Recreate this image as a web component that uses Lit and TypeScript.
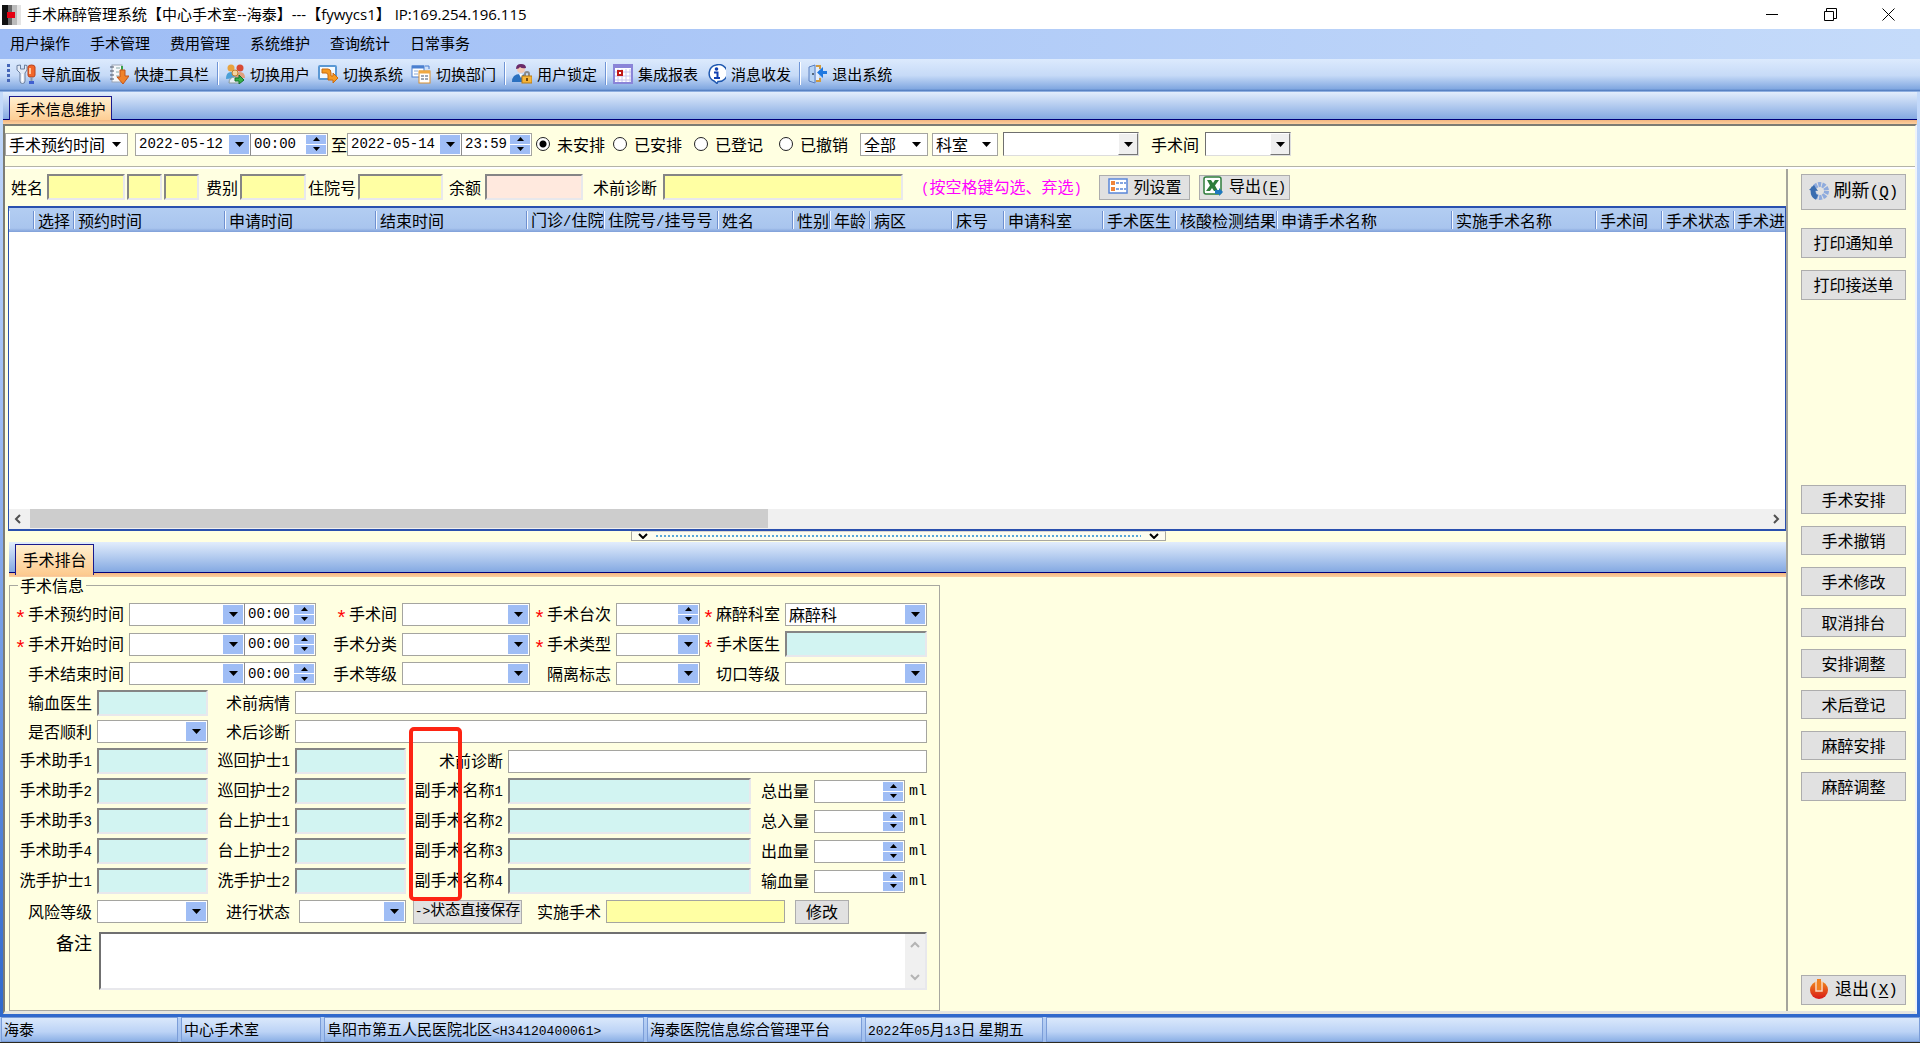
import { LitElement, html, css, svg, nothing } from "lit";
import { customElement } from "lit/decorators.js";

const toolbarGroups: { icon: string; text: string }[][] = [
  [{ icon: "tools", text: "导航面板" }, { icon: "quick", text: "快捷工具栏" }],
  [{ icon: "users", text: "切换用户" }, { icon: "system", text: "切换系统" }, { icon: "dept", text: "切换部门" }],
  [{ icon: "lock", text: "用户锁定" }],
  [{ icon: "report", text: "集成报表" }, { icon: "info", text: "消息收发" }],
  [{ icon: "exit", text: "退出系统" }],
];

const menus = ["用户操作", "手术管理", "费用管理", "系统维护", "查询统计", "日常事务"];

const columns: [string, number][] = [
  ["", 25], ["选择", 40], ["预约时间", 151], ["申请时间", 151], ["结束时间", 151],
  ["门诊/住院", 77], ["住院号/挂号号", 114], ["姓名", 75], ["性别", 37], ["年龄", 40],
  ["病区", 82], ["床号", 52], ["申请科室", 99], ["手术医生", 73], ["核酸检测结果", 101],
  ["申请手术名称", 175], ["实施手术名称", 144], ["手术间", 66], ["手术状态", 72], ["手术进", 52],
];

const actions = ["手术安排", "手术撤销", "手术修改", "取消排台", "安排调整", "术后登记", "麻醉安排", "麻醉调整"];

const icons: Record<string, unknown> = {
  tools: svg`<path d="M1 1.500v4.500l3 3v8q0 2.500 2.500 2.500T9 17V9l2-3V1.500L8.500 1v4h-4V1z" fill="#e4ebf6" stroke="#6a7f9f"/><path d="M6.500 10v7" stroke="#fff" stroke-width="1.500"/><path d="M12 3q0-2 3.500-2T19 3v8q0 2-2 2h-3q-2 0-2-2z" fill="#f2662a" stroke="#b8401a"/><path d="M14 4v6" stroke="#ffc59b" stroke-width="2"/><path d="M15.500 13v4" stroke="#8a94a8" stroke-width="2"/><path d="M13 18.500h5" stroke="#3f5fd0" stroke-width="3"/>`,
  quick: svg`<rect x="3" y="1" width="10" height="17" fill="#f6f8fb" stroke="#9aa4b5"/><path d="M1 3h4M1 7h4M1 11h4M1 15h4" stroke="#4a5568"/><path d="M7 4h4M7 8h3M7 12h3" stroke="#8aa" /><path d="M13 2v5" stroke="#35a24a" stroke-width="2"/><path d="M11 6h5v6h4l-6 8-6-7h3z" fill="#f0822a" stroke="#c0541a"/>`,
  users: svg`<circle cx="6" cy="4" r="3.500" fill="#e8a33e"/><path d="M1 15q0-7 5-7t5 6z" fill="#4aa0d8"/><circle cx="15" cy="4" r="3.500" fill="#d84a34"/><path d="M10 14q0-6 5-6t5 6z" fill="#e0a080"/><circle cx="10" cy="9" r="3" fill="#f4d4a0" stroke="#c08030"/><path d="M4 19q0-6 6-6 4 0 5 6z" fill="#e8eef4" stroke="#8a9a99"/><path d="M10 14h4v-3l5 5-5 4v-3h-4z" fill="#37b24a" stroke="#14702a"/>`,
  system: svg`<rect x="1" y="2" width="17" height="13" rx="1" fill="#f4faff" stroke="#5a98d4" stroke-width="2"/><path d="M4 5h6q3 0 3 4v3h2V9l5 5-5 5v-3h-5v-5q0-2-2-2H4z" fill="#f59a23" stroke="#c96a10"/>`,
  dept: svg`<rect x="1" y="2" width="12" height="11" fill="#fff" stroke="#4a7fd0"/><path d="M1 3h12" stroke="#4a7fd0" stroke-width="3"/><path d="M3 7h4M3 10h4" stroke="#88a8d8"/><path d="M14 2h4v3" stroke="#4a7fd0" fill="none"/><rect x="8" y="7" width="11" height="12" fill="#fff" stroke="#d89030"/><path d="M8 8h11" stroke="#f0a840" stroke-width="3"/><path d="M10 12h3M14 12h3M10 15h3M14 15h3" stroke="#a0a8b4" stroke-width="2"/>`,
  lock: svg`<circle cx="9" cy="5" r="4" fill="#f3c9b4"/><path d="M4 5q0-5 5-5 5 0 5 4-4 1-6-1-1 2-4 2z" fill="#6a2a6a"/><path d="M0 18q0-8 8-8t8 8z" fill="#2a70c0"/><path d="M7 10l2 4 2-4z" fill="#fff"/><path d="M13 12v-2q0-2 2-2t2 2v2" fill="none" stroke="#8a8a8a" stroke-width="2"/><rect x="10" y="12" width="10" height="7" fill="#f5b53a" stroke="#b87a14"/><path d="M15 14v3" stroke="#7a4a08" stroke-width="2"/>`,
  report: svg`<rect x="1" y="1" width="18" height="18" fill="#fff" stroke="#8a84d8" stroke-width="2"/><path d="M1 3h18" stroke="#8a84d8" stroke-width="2"/><path d="M5 5v13M9 5v13M13 5v13M17 5v13M2 8h16M2 12h16M2 16h16" stroke="#c8c4f0"/><rect x="5" y="7" width="4" height="4" fill="#fff" stroke="#c01818" stroke-width="2"/>`,
  info: svg`<path d="M10 1a8.500 8.500 0 1 1 2 16.500l-1 2-3-2.500A8.500 8.500 0 0 1 10 1z" fill="#fff" stroke="#1f58b0" stroke-width="1.500"/><circle cx="10.500" cy="5" r="1.800" fill="#1040b0"/><path d="M8 8.500h3.500V14M8 14h6" stroke="#1040b0" stroke-width="2" fill="none"/>`,
  exit: svg`<path d="M2 3l6-2v18l-6-2z" fill="#b8d4f4" stroke="#5a7fc0"/><path d="M9 2h4v3M13 14v3H9" fill="none" stroke="#d09a40" stroke-width="2"/><path d="M9 3h3v13H9z" fill="#e4eefb"/><circle cx="6" cy="10" r="1" fill="#334455"/><path d="M20 7v3h-4v4l-6-5.500L16 3v4z" fill="#1f78e0"/>`,
  list: svg`<rect x="1" y="3" width="18" height="14" fill="#fff" stroke="#5a86d8" stroke-width="1.500"/><rect x="3" y="5" width="4" height="4" fill="#f0843a"/><rect x="3" y="11" width="4" height="4" fill="#f0843a"/><path d="M8 7h10M8 13h10" stroke="#5a86d8" stroke-width="1.500" stroke-dasharray="3 1"/>`,
  excel: svg`<rect x="1" y="1" width="17" height="17" rx="2" fill="#fff" stroke="#2f7d3b" stroke-width="1.500"/><path d="M4 4h4l2 3 2-3h4l-4 5.500L15 15h-4l-2-3-2 3H3l4-5.500z" fill="#2f7d3b"/><path d="M12 14h4v-2l4 4-4 4v-2h-4z" fill="#1f78c0"/>`,
  refresh: svg`<circle cx="11" cy="10" r="6.500" fill="none" stroke="#8fabdd" stroke-width="5" stroke-dasharray="3 1"/><path d="M5 6.500A7 7 0 0 0 8 16.500" fill="none" stroke="#3a6db0" stroke-width="5"/><path d="M0 9l5-5 4 6z" fill="#3a6db0"/>`,
  power: svg`<defs><linearGradient id="pw" x1="0" y1="0" x2="0" y2="1"><stop offset="0" stop-color="#f08a1c"/><stop offset="1" stop-color="#d81818"/></linearGradient></defs><circle cx="10" cy="11" r="9" fill="url(#pw)"/><path d="M7 2v10h6V2" fill="none" stroke="#fbd9c0" stroke-width="1.500"/><rect x="8" y="0" width="4" height="11" fill="#f08020"/>`,
};

const icon = (name: string) =>
  html`<svg class="icon" viewBox="0 0 20 20" width="20" height="20" aria-hidden="true">${icons[name]}</svg>`;

/* Latin runs are set in a half-width monospaced face beside full-width Chinese. */
const mix = (text: string) =>
  text.split(/([\x21-\x7e]+)/).map((p) => (/^[\x21-\x7e]/.test(p) ? html`<span class="half">${p}</span>` : p));

const down = html`<svg class="tri" viewBox="0 0 9 5" width="9" height="5" aria-hidden="true"><path d="M0 0h9L4.500 5z" /></svg>`;
const up = html`<svg class="tri" viewBox="0 0 7 4" width="7" height="4" aria-hidden="true"><path d="M0 4h7L3.500 0z" /></svg>`;
const downSmall = html`<svg class="tri" viewBox="0 0 7 4" width="7" height="4" aria-hidden="true"><path d="M0 0h7L3.500 4z" /></svg>`;

@customElement("app-root")
export class AppRoot extends LitElement {
  static styles = css`
    :host { display: block; font-family: "Noto Sans CJK SC", "Liberation Sans", sans-serif; font-size: 16px; line-height: 20px; color: #000; }
    * { box-sizing: border-box; }
    button, input, select, textarea { font: inherit; color: inherit; margin: 0; padding: 0; border-radius: 0; min-width: 0; outline: none; }
    .app { min-height: 100vh; display: flex; flex-direction: column; background: #3069cc; }
    .titlebar { height: 29px; flex: none; background: #fff; display: flex; align-items: center; padding: 0 3px 0 2px; }
    .titlebar h1 { margin: 0 0 0 6px; font-family: "Open Sans", "Noto Sans CJK SC", sans-serif; font-size: 15px; font-weight: 400; flex: 1; white-space: pre; padding-bottom: 2px; }
    .winbtn { width: 58px; height: 29px; border: 0; background: none; display: grid; place-items: center; }
    .menubar { height: 30px; flex: none; display: flex; align-items: center; gap: 20px; padding: 0 10px 2px; background: linear-gradient(to right, #9dbcf5, #c5dbfa); font-size: 15px; }
    .menubar button, .toolbar button { border: 0; background: none; white-space: nowrap; }
    .toolbar { height: 33px; flex: none; display: flex; align-items: center; padding: 0 0 4px 7px; font-size: 15px; background: linear-gradient(to bottom, #dceafd, #c6daf7 50%, #7fa6e0 92%, #3f6cb4 94%, #a9c5ef); }
    .toolbar button { display: flex; align-items: center; gap: 5px; padding-right: 8px; }
    .grip { width: 3px; height: 20px; margin-right: 6px; background: repeating-linear-gradient(to bottom, #4566b8 0 3px, transparent 3px 5px); }
    .sep { width: 2px; height: 23px; margin-right: 6px; background: linear-gradient(to right, #6f95d6 50%, #fff 50%); }
    .icon { display: block; flex: none; }
    .half { font-family: "Liberation Mono", monospace; font-size: 14px; }
    .frame { flex: 1; display: flex; flex-direction: column; padding: 0 3px 3px; background: linear-gradient(to bottom, #c4dafa, #9dbcf5 35%, #3069cc); }
    .tabs { flex: none; display: flex; align-items: flex-end; background: linear-gradient(to bottom, #e2edfc, #84a9e2); border-bottom: 1px solid #00007b; }
    .tabs.outer { height: 28px; padding-left: 6px; }
    .tabs.inner { height: 31px; padding-left: 6px; }
    .tab { margin-bottom: -3px; padding-bottom: 2px; border: 1px solid #1a1a8c; border-bottom: 0; background: linear-gradient(to bottom, #fff0d0, #fdca8e); white-space: nowrap; }
    .outer .tab { height: 26px; width: 103px; font-size: 15px; }
    .inner .tab { height: 31px; width: 79px; font-size: 16px; }
    .orange { flex: none; height: 4px; background: linear-gradient(to bottom, #f2b680, #fdd0a0); }
    .content { flex: 1; display: flex; flex-direction: column; background: #ffffe1; border: solid; border-width: 2px 2px 3px; border-color: #7c7c74 #eef3fb #e6e6e0 #7c7c74; }
    .filter { height: 41px; flex: none; display: flex; align-items: center; padding-bottom: 4px; border-bottom: 1px solid #b4b4a8; box-shadow: 0 2px 0 #fff; }
    .split { flex: 1; display: flex; margin-top: 2px; }
    .left { flex: 1; min-width: 0; display: flex; flex-direction: column; border-right: 2px solid #a5a59c; }
    .box { display: grid; grid-template: minmax(0, 1fr) / minmax(0, 1fr); height: 23px; border: 1px solid #a5a5a0; background: #fff; min-width: 0; }
    .box > * { grid-area: 1 / 1; }
    .box select, .box input { width: 100%; height: 100%; border: 0; background: transparent; appearance: none; padding: 0 0 2px 3px; }
    .dd { justify-self: end; pointer-events: none; width: 20px; margin: 1px; display: grid; place-items: center; background: #9fbdf5; }
    .plain .dd { background: none; }
    .raised { height: 24px; border: 1px solid; border-color: #6f6f6f #ddd #ddd #6f6f6f; }
    .raised .dd { background: #efefef; margin: 0; border: 1px solid; border-color: #fff #777 #777 #fff; }
    .tri { display: block; fill: #000; }
    .dt { display: flex; }
    .dt .box + .box { border-left-color: #8c8c8c; margin-left: -1px; }
    .dt .box input { font-family: "Liberation Mono", monospace; font-size: 14px; padding-bottom: 0; }
    .dt button { border: 0; pointer-events: auto; }
    .spin { justify-self: end; width: 20px; margin: 1px; display: grid; grid-template-rows: 1fr 1fr; gap: 1px; }
    .spin button { border: 0; background: #9fbdf5; display: grid; place-items: center; }
    .date { width: 116px; }
    .time { width: 78px; }
    .filter .d2 .date { width: 115px; }
    .filter .d2 .time { width: 71px; }
    .w-kind { width: 123px; margin-right: 7px; }
    .to { width: 19px; text-align: right; }
    .radios { display: flex; gap: 8px; margin: 0 12px 0 4px; }
    .radios label { display: flex; align-items: center; gap: 7px; white-space: nowrap; }
    .radios label:nth-child(3) { margin-left: 4px; }
    .radios label:nth-child(4) { margin-left: 8px; }
    .radios input { appearance: none; width: 14px; height: 14px; border: 1px solid #222; border-radius: 50%; background: #fff; }
    .radios input:checked { background: radial-gradient(circle, #000 0 3px, #fff 4px); }
    .w-68 { width: 68px; margin-right: 4px; }
    .w-66 { width: 66px; margin-right: 5px; }
    .w-136 { width: 136px; margin-right: 12px; }
    .w-86 { width: 86px; margin-left: 6px; }
    .patient { height: 37px; flex: none; display: flex; align-items: center; padding: 0 0 1px 6px; white-space: nowrap; }
    .patient label { margin-right: 2px; }
    .sunken { height: 26px; border: 2px solid; border-color: #858585 #e8e8ec #e8e8ec #858585; background: #d2f4f2; width: 100%; }
    .patient .sunken { background: #ffffa3; margin-right: 2px; }
    .patient .pink { background: #ffe9de; }
    .patient .f1 { width: 78px; margin-left: 2px; }
    .patient .f2 { width: 35px; }
    .patient .f3 { width: 66px; }
    .patient .f4 { width: 85px; margin-right: 6px; }
    .patient .f5 { width: 98px; margin: 0 10px 0 2px; }
    .patient .f6 { width: 240px; margin: 0 18px 0 4px; }
    .patient .last { margin-right: 7px; }
    .hint { color: #ff00ff; width: 178px; }
    .btn { background: #e1e1e1; border: 1px solid #adadad; padding-bottom: 2px; display: flex; align-items: center; justify-content: center; gap: 6px; white-space: nowrap; }
    .patient .btn { width: 91px; height: 25px; margin-right: 9px; }
    .gridbox { flex: 1; min-height: 200px; margin-left: 3px; background: #fff; border: 1px solid #2a50ae; border-top-width: 2px; border-bottom-width: 2px; display: flex; flex-direction: column; overflow: hidden; }
    table { width: 100%; table-layout: fixed; border-collapse: collapse; }
    th { font-weight: 400; text-align: left; padding: 0; height: 24px; background: linear-gradient(to bottom, #b3cdf2, #a9c5ee 84%, #7f9fd8); white-space: nowrap; overflow: hidden; }
    th .cell { display: flex; align-items: center; height: 18px; padding-left: 3px; border-left: 1px solid #f4f8ff; border-right: 1px solid #6e90d0; }
    th:last-child .cell { border-right: 0; padding-left: 2px; }
    .rows { flex: 1; }
    .hscroll { height: 20px; display: flex; align-items: center; background: #f0f0f0; }
    .hscroll .track { flex: 1; height: 20px; margin: 0 4px 0 3px; display: grid; grid-template-columns: 426fr 574fr; }
    .hscroll .thumb { height: 19px; background: #cdcdcd; }
    .hscroll button { width: 18px; height: 20px; border: 0; background: none; display: grid; place-items: center; }
    .splitter { height: 11px; flex: none; display: flex; justify-content: center; padding-left: 6px; }
    .splitter button { width: 535px; height: 10px; display: flex; align-items: center; gap: 8px; padding: 0 6px; background: #fdfdf0; border: 1px solid #a8a8a0; border-top-color: #d8d8d0; }
    .dots { flex: 1; height: 2px; background: repeating-linear-gradient(to right, #5aa8d8 0 2px, transparent 2px 4px); }
    .lower { flex: none; padding-left: 4px; }
    fieldset { position: relative; width: 931px; min-width: 0; margin: 0; padding: 6px 0 20px; border: 1px solid #a8a8a0; }
    legend { margin-left: 8px; padding: 0 2px; line-height: 16px; }
    .lab { display: flex; align-items: center; justify-content: flex-end; gap: 3px; padding: 0 5px 2px 0; white-space: nowrap; }
    .star { color: #ff0000; font-family: "Liberation Mono", monospace; font-size: 20px; line-height: 26px; height: 12px; width: 9px; display: flex; justify-content: center; }
    .ga { display: grid; grid-template-columns: 119px 187px 86px 128px 86px 84px 85px 142px; grid-template-rows: 30px 30px 29px; align-items: center; }
    .ga .time { width: 72px; }
    .gb { display: grid; grid-template-columns: 87px 111px 87px 111px 102px 243px 63px 91px 22px; grid-template-rows: repeat(2, 29px) repeat(5, 30px) 31px; align-items: center; }
    .s6 { grid-column: span 6; }
    .s5 { grid-column: span 5; }
    .s4 { grid-column: span 4; }
    .state { margin-left: 4px; }
    .ml { font-family: "Liberation Mono", monospace; font-size: 15px; padding: 2px 0 0 4px; }
    .bar { display: flex; align-items: center; padding-left: 7px; }
    .bar .btn { height: 24px; }
    .bar .save { width: 109px; font-size: 15px; }
    .bar .save .half { font-size: 13px; }
    .bar .lab { width: 84px; }
    .bar .box { width: 179px; background: #ffffa3; margin-right: 10px; }
    .bar .edit { width: 54px; }
    .memo { display: grid; grid-template-columns: 87px 830px; margin-top: 5px; }
    .memo label { font-size: 18px; text-align: right; padding-right: 5px; }
    .memobox { display: grid; margin-left: 2px; height: 58px; background: #fff; border: 2px solid; border-color: #707070 #e8e8ec #e8e8ec #707070; }
    .memobox > * { grid-area: 1 / 1; }
    .memobox textarea { border: 0; background: none; resize: none; width: 100%; height: 100%; overflow: hidden; }
    .vscroll { justify-self: end; width: 20px; background: #f0f0f0; display: flex; flex-direction: column; align-items: center; justify-content: space-between; padding: 7px 0; }
    .mark { position: absolute; left: 399px; top: 134px; width: 53px; height: 174px; border: 4px solid #fd2413; border-radius: 5px; pointer-events: none; }
    .side { width: 127px; flex: none; display: flex; flex-direction: column; padding: 5px 9px 6px 13px; }
    .side .btn { height: 30px; flex: none; }
    .side .big { height: 36px; font-size: 18px; gap: 5px; margin-bottom: 18px; }
    .side .half { font-size: 16px; }
    .side .print { margin-bottom: 12px; }
    .acts { display: flex; flex-direction: column; gap: 12px; margin-top: 173px; }
    .side .acts .btn { height: 29px; }
    .side .quit { margin-top: auto; font-size: 17px; }
    u { text-underline-offset: 2px; }
    .status { flex: none; height: 26px; display: flex; gap: 3px; padding-left: 1px; font-size: 15px; line-height: 22px; background: linear-gradient(to bottom, #b9d1f5, #9dbcec); border-bottom: 1px solid #2b2a20; }
    .status .c { border: 1px solid #7b9dd8; background: linear-gradient(to bottom, #dae8fb, #bcd3f6 60%, #8db1e6); padding-left: 2px; white-space: pre; }
    .status .half { font-size: 13px; }
    .c1 { width: 177px; } .c2 { width: 140px; } .c3 { width: 320px; } .c4 { width: 215px; } .c5 { width: 178px; } .c6 { flex: 1; }
  `;

  private select(id: string, cls = "", value = "", label = "") {
    return html`<span class="box ${cls}"><select id=${id} aria-label=${label || nothing}><option>${value}</option></select><span class="dd">${down}</span></span>`;
  }

  private spin(name: string) {
    return html`<span class="spin"><button aria-label="${name}增加">${up}</button><button aria-label="${name}减少">${downSmall}</button></span>`;
  }

  private dateTime(id: string, name: string, date: string, time: string, cls = "") {
    return html`<span class="dt ${cls}">
      <span class="box date"><input id=${id} type="text" aria-label=${name} .value=${date} /><button class="dd" aria-label="${name}日历">${down}</button></span>
      <span class="box time"><input type="text" aria-label="${name}时刻" .value=${time} />${this.spin(name)}</span>
    </span>`;
  }

  private label(id: string, text: string, star = false) {
    return html`<label class="lab" for=${id}>${star ? html`<span class="star">*</span>` : nothing}<span>${mix(text)}</span></label>`;
  }

  private spinner(id: string) {
    return html`<span class="box"><input id=${id} type="text" />${this.spin("数值")}</span>`;
  }

  private staffRow(a: string, b: string, i: number) {
    return html`${this.label(`a${i}`, a)}<input class="sunken" id="a${i}" type="text" />
      ${this.label(`b${i}`, b)}<input class="sunken" id="b${i}" type="text" />`;
  }

  private opRow(i: number, volume: string) {
    return html`${this.label(`op${i}`, `副手术名称${i}`)}<input class="sunken" id="op${i}" type="text" />
      ${this.label(`v${i}`, volume)}${this.spinner(`v${i}`)}<span class="ml">ml</span>`;
  }

  private schedule() {
    return html`<fieldset>
      <legend>手术信息</legend>
      <div class="ga">
        ${this.label("t1", "手术预约时间", true)}${this.dateTime("t1", "手术预约时间", "", "00:00")}
        ${this.label("room", "手术间", true)}${this.select("room")}
        ${this.label("seq", "手术台次", true)}${this.spinner("seq")}
        ${this.label("anes", "麻醉科室", true)}${this.select("anes", "", "麻醉科")}
        ${this.label("t2", "手术开始时间", true)}${this.dateTime("t2", "手术开始时间", "", "00:00")}
        ${this.label("cls", "手术分类")}${this.select("cls")}
        ${this.label("typ", "手术类型", true)}${this.select("typ")}
        ${this.label("doc", "手术医生", true)}<input class="sunken" id="doc" type="text" />
        ${this.label("t3", "手术结束时间")}${this.dateTime("t3", "手术结束时间", "", "00:00")}
        ${this.label("lvl", "手术等级")}${this.select("lvl")}
        ${this.label("iso", "隔离标志")}${this.select("iso")}
        ${this.label("cut", "切口等级")}${this.select("cut")}
      </div>
      <div class="gb">
        ${this.label("bd", "输血医生")}<input class="sunken" id="bd" type="text" />
        ${this.label("pre", "术前病情")}<span class="box s6"><input id="pre" type="text" /></span>
        ${this.label("ok", "是否顺利")}${this.select("ok")}
        ${this.label("post", "术后诊断")}<span class="box s6"><input id="post" type="text" /></span>
        ${this.staffRow("手术助手1", "巡回护士1", 1)}
        ${this.label("dx", "术前诊断")}<span class="box s4"><input id="dx" type="text" /></span>
        ${this.staffRow("手术助手2", "巡回护士2", 2)}${this.opRow(1, "总出量")}
        ${this.staffRow("手术助手3", "台上护士1", 3)}${this.opRow(2, "总入量")}
        ${this.staffRow("手术助手4", "台上护士2", 4)}${this.opRow(3, "出血量")}
        ${this.staffRow("洗手护士1", "洗手护士2", 5)}${this.opRow(4, "输血量")}
        ${this.label("risk", "风险等级")}${this.select("risk")}
        ${this.label("st", "进行状态")}${this.select("st", "state")}
        <div class="bar s5">
          <button class="btn save"><span>${mix("->")}状态直接保存</span></button>
          ${this.label("done", "实施手术")}<span class="box"><input id="done" type="text" /></span>
          <button class="btn edit">修改</button>
        </div>
      </div>
      <div class="memo">
        <label for="memo">备注</label>
        <div class="memobox">
          <textarea id="memo"></textarea>
          <span class="vscroll">
            <svg width="10" height="7" fill="none" stroke="#b4b4b4" stroke-width="2"><path d="M1 6l4-4 4 4" /></svg>
            <svg width="10" height="7" fill="none" stroke="#b4b4b4" stroke-width="2"><path d="M1 1l4 4 4-4" /></svg>
          </span>
        </div>
      </div>
      <div class="mark"></div>
    </fieldset>`;
  }

  render() {
    return html`<div class="app">
      <header class="titlebar">
        <svg width="19" height="20" viewBox="0 0 19 20" aria-hidden="true"><path d="M0 0h6v20H0z" fill="#111" /><path d="M6 0h4v20H6z" fill="#666" /><path d="M10 0h5v20h-5z" fill="#bbb" /><path d="M15 0h4v20h-4z" fill="#e4e4e4" /><path d="M5 7h8v6H5z" fill="#e60012" /></svg>
        <h1>手术麻醉管理系统【中心手术室--海泰】---【fywycs1】 IP:169.254.196.115</h1>
        <button class="winbtn" aria-label="最小化"><svg width="12" height="12"><path d="M0 5.500h12" stroke="#000" /></svg></button>
        <button class="winbtn" aria-label="还原"><svg width="13" height="13" fill="none" stroke="#000"><path d="M.5 3.500h9v9h-9zM2.500 3V.5h10v10H10" /></svg></button>
        <button class="winbtn" aria-label="关闭"><svg width="13" height="13" stroke="#000"><path d="M.5.5l12 12M12.500.5l-12 12" /></svg></button>
      </header>
      <nav class="menubar">${menus.map((m) => html`<button>${m}</button>`)}</nav>
      <div class="toolbar">
        <span class="grip"></span>
        ${toolbarGroups.map((g, i) => html`${i ? html`<span class="sep"></span>` : nothing}${g.map((t) => html`<button>${icon(t.icon)}${t.text}</button>`)}`)}
      </div>
      <main class="frame">
        <div class="tabs outer"><button class="tab">手术信息维护</button></div>
        <div class="orange"></div>
        <section class="content">
          <div class="filter">
            ${this.select("kind", "plain w-kind", "手术预约时间", "时间类型")}
            ${this.dateTime("from", "开始日期", "2022-05-12", "00:00")}
            <span class="to">至</span>
            ${this.dateTime("till", "结束日期", "2022-05-14", "23:59", "d2")}
            <div class="radios">
              ${["未安排", "已安排", "已登记", "已撤销"].map((r, i) => html`<label><input type="radio" name="state" ?checked=${i === 0} />${r}</label>`)}
            </div>
            ${this.select("all", "plain w-68", "全部", "范围")}
            ${this.select("dep", "plain w-66", "科室", "科室类型")}
            ${this.select("depv", "raised w-136", "", "科室")}
            <label for="roomf">手术间</label>
            ${this.select("roomf", "raised w-86")}
          </div>
          <div class="split">
            <div class="left">
              <div class="patient">
                <label for="p1">姓名</label><input id="p1" class="sunken f1" /><input class="sunken f2" aria-label="性别" /><input class="sunken f2 last" aria-label="年龄" />
                <label for="p2">费别</label><input id="p2" class="sunken f3" />
                <label for="p3">住院号</label><input id="p3" class="sunken f4" />
                <label for="p4">余额</label><input id="p4" class="sunken pink f5" />
                <label for="p5">术前诊断</label><input id="p5" class="sunken f6" />
                <span class="hint">${mix("(按空格键勾选、弃选)")}</span>
                <button class="btn">${icon("list")}列设置</button>
                <button class="btn">${icon("excel")}<span>导出<span class="half">(<u>E</u>)</span></span></button>
              </div>
              <div class="gridbox">
                <table>
                  <colgroup>${columns.map(([, w], i) => (i < columns.length - 1 ? html`<col style="width:${w}px" />` : html`<col />`))}</colgroup>
                  <thead><tr>${columns.map(([c]) => html`<th scope="col"><div class="cell"><span>${mix(c)}</span></div></th>`)}</tr></thead>
                </table>
                <div class="rows"></div>
                <div class="hscroll">
                  <button aria-label="向左滚动"><svg width="8" height="10" fill="none" stroke="#505050" stroke-width="2"><path d="M6 1L2 5l4 4" /></svg></button>
                  <div class="track"><div class="thumb"></div></div>
                  <button aria-label="向右滚动"><svg width="8" height="10" fill="none" stroke="#505050" stroke-width="2"><path d="M2 1l4 4-4 4" /></svg></button>
                </div>
              </div>
              <div class="splitter"><button aria-label="折叠面板">
                <svg width="10" height="6" fill="none" stroke="#000" stroke-width="2"><path d="M1 1l4 4 4-4" /></svg><span class="dots"></span><svg width="10" height="6" fill="none" stroke="#000" stroke-width="2"><path d="M1 1l4 4 4-4" /></svg>
              </button></div>
              <div class="lower">
                <div class="tabs inner"><button class="tab">手术排台</button></div>
                <div class="orange"></div>
                ${this.schedule()}
              </div>
            </div>
            <aside class="side">
              <button class="btn big">${icon("refresh")}<span>刷新<span class="half">(<u>Q</u>)</span></span></button>
              <button class="btn print">打印通知单</button>
              <button class="btn print">打印接送单</button>
              <div class="acts">${actions.map((a) => html`<button class="btn">${a}</button>`)}</div>
              <button class="btn quit">${icon("power")}<span>退出<span class="half">(<u>X</u>)</span></span></button>
            </aside>
          </div>
        </section>
      </main>
      <footer class="status">
        <span class="c c1">海泰</span><span class="c c2">中心手术室</span><span class="c c3">${mix("阜阳市第五人民医院北区<H34120400061>")}</span><span class="c c4">海泰医院信息综合管理平台</span><span class="c c5">${mix("2022年05月13日 星期五")}</span><span class="c c6"></span>
      </footer>
    </div>`;
  }
}
